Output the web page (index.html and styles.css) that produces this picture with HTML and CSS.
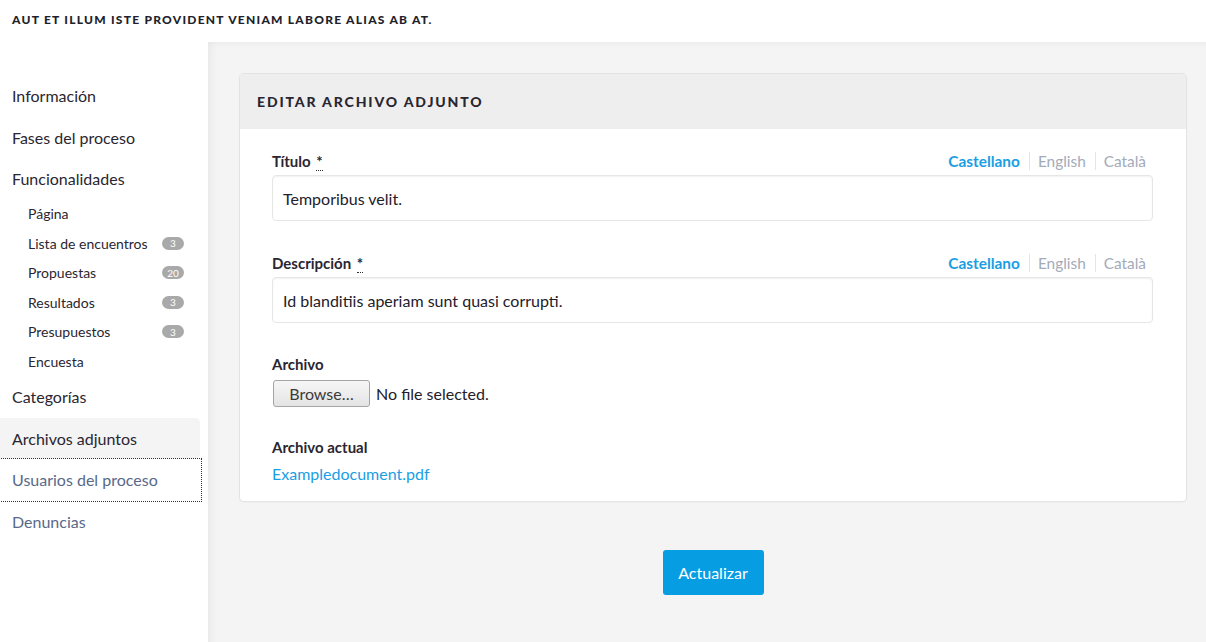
FILE: index.html
```html
<!DOCTYPE html>
<html lang="es">
<head>
<meta charset="utf-8">
<title>Editar archivo adjunto</title>
<link rel="stylesheet" href="styles.css">
</head>
<body>
<header class="topbar">
  <span class="topbar-title">Aut et illum iste provident veniam labore alias ab at.</span>
</header>
<div class="layout">
  <nav class="sidebar">
    <ul class="nav">
      <li class="nav-item"><a href="#">Información</a></li>
      <li class="nav-item"><a href="#">Fases del proceso</a></li>
      <li class="nav-item nav-item--group"><a href="#">Funcionalidades</a></li>
      <li class="subnav">
        <ul>
          <li class="sub-item"><a href="#">Página</a></li>
          <li class="sub-item"><a href="#">Lista de encuentros</a><span class="badge">3</span></li>
          <li class="sub-item"><a href="#">Propuestas</a><span class="badge">20</span></li>
          <li class="sub-item"><a href="#">Resultados</a><span class="badge">3</span></li>
          <li class="sub-item"><a href="#">Presupuestos</a><span class="badge">3</span></li>
          <li class="sub-item"><a href="#">Encuesta</a></li>
        </ul>
      </li>
      <li class="nav-item"><a href="#">Categorías</a></li>
      <li class="nav-item is-active"><a href="#">Archivos adjuntos</a></li>
      <li class="nav-item is-focused is-visited"><a href="#">Usuarios del proceso</a></li>
      <li class="nav-item is-visited"><a href="#">Denuncias</a></li>
    </ul>
  </nav>
  <main class="main">
    <section class="card">
      <div class="card-header">
        <h2 class="card-title">Editar archivo adjunto</h2>
      </div>
      <div class="card-body">
        <div class="field">
          <div class="field-head">
            <label class="label">Título <abbr class="req" title="requerido">*</abbr></label>
            <ul class="langs">
              <li class="lang is-current">Castellano</li>
              <li class="lang">English</li>
              <li class="lang">Català</li>
            </ul>
          </div>
          <div class="input">Temporibus velit.</div>
        </div>
        <div class="field">
          <div class="field-head">
            <label class="label">Descripción <abbr class="req" title="requerido">*</abbr></label>
            <ul class="langs">
              <li class="lang is-current">Castellano</li>
              <li class="lang">English</li>
              <li class="lang">Català</li>
            </ul>
          </div>
          <div class="input">Id blanditiis aperiam sunt quasi corrupti.</div>
        </div>
        <div class="field field--file">
          <div class="label">Archivo</div>
          <div class="file-row">
            <span class="browse">Browse…</span>
            <span class="file-name">No file selected.</span>
          </div>
        </div>
        <div class="field field--current">
          <div class="label">Archivo actual</div>
          <a class="file-link" href="#">Exampledocument.pdf</a>
        </div>
      </div>
    </section>
    <div class="actions">
      <button class="btn" type="button">Actualizar</button>
    </div>
  </main>
</div>
</body>
</html>
```
FILE: styles.css
```css
* { box-sizing: border-box; }
html, body { margin: 0; padding: 0; }
body {
  font-family: Lato, "Noto Sans", "DejaVu Sans", sans-serif;
  color: #2c2a33;
  background: #ffffff;
  width: 1206px;
  height: 642px;
  overflow: hidden;
}
ul { list-style: none; margin: 0; padding: 0; }
a { text-decoration: none; color: inherit; }

.topbar {
  height: 42px;
  display: flex;
  align-items: center;
  padding-left: 12px;
  background: #fff;
}
.topbar-title {
  font-size: 12px;
  font-weight: 900;
  text-transform: uppercase;
  letter-spacing: 1.25px;
  color: #221f2c;
  margin-top: -4px;
}

.layout {
  display: flex;
  height: 600px;
}

.sidebar {
  width: 208px;
  flex: 0 0 208px;
  background: #fff;
  padding-top: 33px;
}
.nav-item {
  height: 41.5px;
  display: flex;
  align-items: center;
  padding-left: 12px;
  width: 200px;
  font-size: 16px;
  color: #2a2631;
}
.nav-item--group { height: 41px; }
.nav-item.is-active {
  background: #f4f4f4;
  border-radius: 0 5px 5px 0;
}
.nav-item.is-focused {
  outline: 1px dotted #2e2f3a;
  width: 201px;
}
.nav-item.is-visited { color: #59698a; }

.subnav { padding: 0 0 0 28px; }
.sub-item {
  height: 29.5px;
  display: flex;
  align-items: center;
  justify-content: space-between;
  padding-right: 24px;
  font-size: 14px;
  color: #2a2631;
}
.badge {
  display: inline-flex;
  align-items: center;
  justify-content: center;
  min-width: 22px;
  height: 13px;
  border-radius: 7px;
  background: #a9a9a9;
  color: #fff;
  font-size: 10px;
  line-height: 1;
}

.main {
  flex: 1;
  background: #f4f4f4;
  padding: 32px 20px 32px 32px;
  box-shadow: inset 6px 4px 8px -4px rgba(0,0,0,0.06);
}

.card {
  background: #fff;
  border-radius: 4px;
  box-shadow: 0 0 0 1px #e3e3e3, 0 1px 2px rgba(0,0,0,0.08);
  overflow: hidden;
}
.card-header {
  height: 55px;
  background: #eeeeee;
  display: flex;
  align-items: center;
  padding-left: 17px;
}
.card-title {
  margin: 0;
  font-size: 14px;
  font-weight: 900;
  text-transform: uppercase;
  letter-spacing: 1.85px;
  color: #2a2631;
}
.card-body {
  padding: 21px 33px 18px 32px;
}

.field { margin-bottom: 31px; }
.field-head {
  display: flex;
  justify-content: space-between;
  align-items: center;
  height: 22px;
  margin-bottom: 3px;
}
.label {
  font-size: 15px;
  font-weight: 700;
  color: #2a2631;
}
.req {
  text-decoration: none;
  border-bottom: 1px dotted #2c2a33;
  margin-left: 2px;
  cursor: help;
}
.langs {
  display: flex;
  padding-right: 7px;
  font-size: 15.4px;
}
.lang {
  color: #a3abb9;
  padding: 0 9px 0 8px;
  border-left: 1px solid #e4e4e4;
  line-height: 18px;
}
.lang:first-child { border-left: none; }
.lang:last-child { padding-right: 0; }
.lang.is-current { color: #1a9ee3; font-weight: 700; }

.input {
  height: 46px;
  border: 1px solid #e6e6e6;
  border-radius: 4px;
  box-shadow: inset 0 1px 2px rgba(0,0,0,0.06);
  display: flex;
  align-items: center;
  padding-left: 10px;
  font-size: 16px;
  color: #23202b;
}

.field--file { margin-bottom: 30px; }
.field--file .label { height: 20px; line-height: 20px; margin-bottom: 6px; }
.file-row { display: flex; align-items: center; gap: 6px; }
.browse {
  display: inline-flex;
  align-items: center;
  justify-content: center;
  width: 97px;
  height: 27px;
  margin-left: 1px;
  border: 1px solid #a5a5a5;
  border-radius: 3px;
  background: linear-gradient(#f6f6f6, #e4e4e4);
  font-size: 16px;
  color: #3b3b3b;
}
.file-name { font-size: 16px; color: #23202b; }

.field--current { margin-bottom: 0; }
.field--current .label { height: 20px; line-height: 20px; margin-bottom: 7px; }
.file-link { font-size: 16px; color: #1a9ee3; }

.actions {
  display: flex;
  justify-content: center;
  margin-top: 49px;
}
.btn {
  width: 101px;
  height: 45px;
  border: none;
  border-radius: 3px;
  background: #069de3;
  color: #fff;
  font-family: inherit;
  font-size: 16px;
  cursor: pointer;
}
```
